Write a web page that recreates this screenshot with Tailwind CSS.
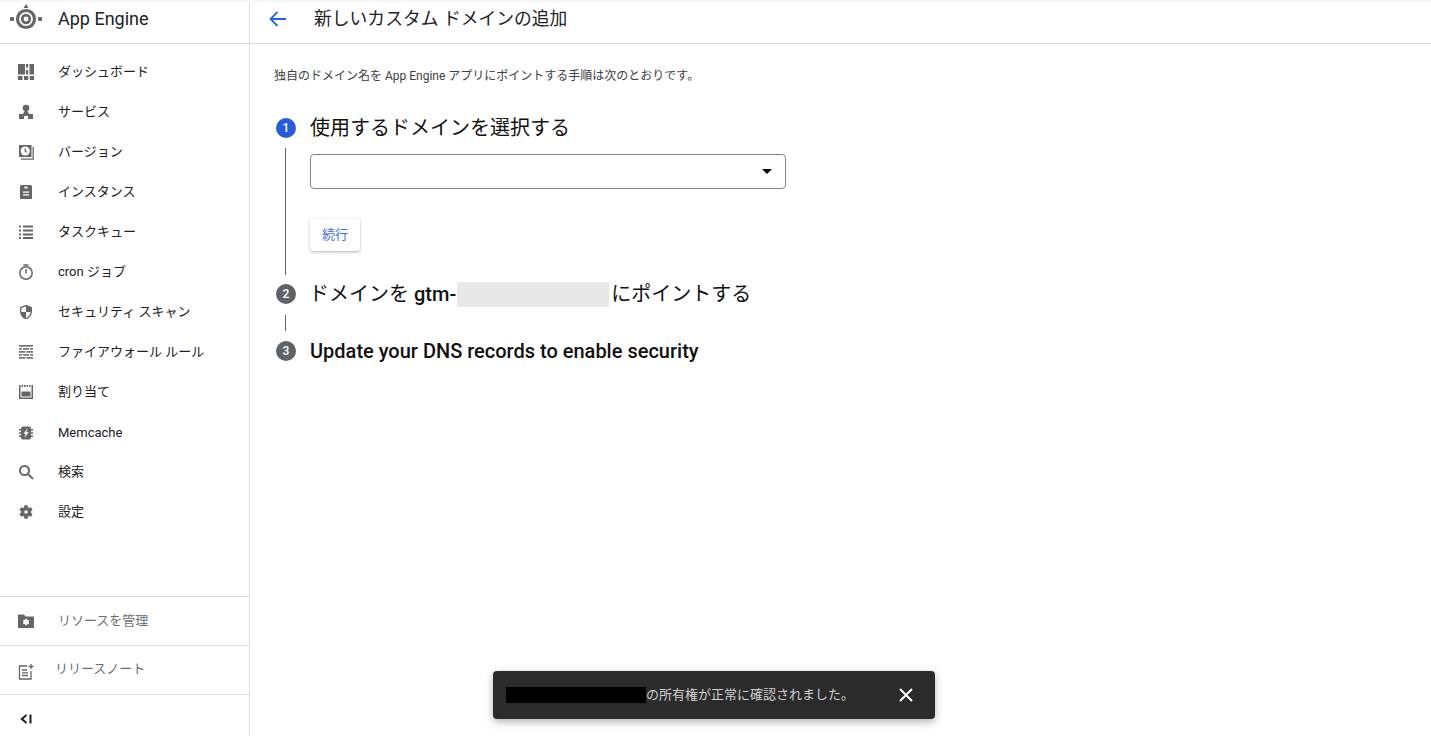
<!DOCTYPE html>
<html lang="ja">
<head>
  <meta charset="UTF-8">
  <title>App Engine</title>
  <script src="https://cdn.jsdelivr.net/npm/@tailwindcss/browser@4"></script>
</head>
<body class="h-[736px] overflow-hidden bg-white text-[#202124] font-['Roboto','Noto_Sans_CJK_JP',sans-serif]">
  <div class="flex h-full relative">
    <!-- faint shadow along the top of the page -->
    <div class="absolute inset-x-0 top-0 h-[2px] bg-[#f6f6f6]"></div>

    <!-- sidebar -->
    <aside class="w-[250px] shrink-0 border-r border-[#dadce0] flex flex-col">
      <div class="h-[44px] shrink-0 border-b border-[#dadce0] flex items-center pl-[10px]">
        <svg class="w-[32px] h-[32px] -mt-[5px]" viewBox="0 0 32 32" fill="#666">
          <path d="M16 1l2.500 4h-5z"/>
          <rect x="0" y="14" width="4" height="4" rx="1"/>
          <rect x="28" y="14" width="4" height="4" rx="1"/>
          <circle cx="16" cy="16" r="8.500" fill="none" stroke="#666" stroke-width="3.200"/>
          <circle cx="16" cy="16" r="3.800" fill="none" stroke="#666" stroke-width="2.700"/>
        </svg>
        <span class="ml-[16px] text-[18px] -mt-[6px]">App Engine</span>
      </div>

      <nav class="pt-[8px] flex-1 text-[13px]">
        <a class="h-[40px] flex items-center pl-[18px] gap-[24px]">
          <svg class="w-[16px] h-[16px]" viewBox="0 0 16 16" fill="#666"><path d="M0 0h7v10.500H0zM8 0h2.200v3.500H8zM8 6h2.200v4.500H8zM11.500 0H16v10.500h-4.500zM0 12h4.500v4H0zM6 12h4.200v4H6zM11.700 12H16v4h-4.300z"/></svg>
          <span>ダッシュボード</span>
        </a>
        <a class="h-[40px] flex items-center pl-[18px] gap-[24px]">
          <svg class="w-[16px] h-[16px]" viewBox="0 0 16 16" fill="#666"><circle cx="8" cy="4" r="3.300"/><path d="M1 10h5v5H1zM10 10h5v5h-5zM5 10l2.200-4h1.600L11 10l-1.500 2h-3z"/></svg>
          <span>サービス</span>
        </a>
        <a class="h-[40px] flex items-center pl-[18px] gap-[24px]">
          <svg class="w-[16px] h-[16px]" viewBox="0 0 16 16" fill="none" stroke="#666"><rect x="1" y="1" width="12.500" height="12" fill="#666" stroke="none"/><circle cx="7.200" cy="7" r="4.600" fill="#fff" stroke="none"/><path d="M7.200 4.500v2.700l1.800 1.100" stroke-width="1.300"/><path d="M15.200 3v12.200H3" stroke-width="1.300"/></svg>
          <span>バージョン</span>
        </a>
        <a class="h-[40px] flex items-center pl-[18px] gap-[24px]">
          <svg class="w-[16px] h-[16px]" viewBox="0 0 16 16" fill="#666"><path d="M2 2.500a1.500 1.500 0 0 1 1.500-1.500h9A1.500 1.500 0 0 1 14 2.500V15H2z"/><path d="M6.500 2.500h3v2h-3zM5 7.500h6v1.200H5zM5 10.300h6v1.200H5z" fill="#fff"/></svg>
          <span>インスタンス</span>
        </a>
        <a class="h-[40px] flex items-center pl-[18px] gap-[24px]">
          <svg class="w-[16px] h-[16px]" viewBox="0 0 16 16" fill="#666"><path d="M1 1.500h2v2H1zM5 1.500h10v2H5zM1 5.500h2v2H1zM5 5.500h10v2H5zM1 9.500h2v2H1zM5 9.500h10v2H5zM1 13h2v2H1zM5 13h10v2H5z"/></svg>
          <span>タスクキュー</span>
        </a>
        <a class="h-[40px] flex items-center pl-[18px] gap-[24px]">
          <svg class="w-[16px] h-[16px]" viewBox="0 0 16 16" fill="none" stroke="#666" stroke-width="1.500"><circle cx="8" cy="9" r="6.200"/><path d="M5.500 1h5M8 5v4.500"/></svg>
          <span>cron ジョブ</span>
        </a>
        <a class="h-[40px] flex items-center pl-[18px] gap-[24px]">
          <svg class="w-[16px] h-[16px]" viewBox="0 0 24 24" fill="#666"><path d="M12 1L3 5v6c0 5.550 3.840 10.740 9 12 5.160-1.260 9-6.450 9-12V5l-9-4zm0 10.990h7c-.53 4.120-3.280 7.790-7 8.940V12H5V6.300l7-3.110v8.800z"/></svg>
          <span>セキュリティ スキャン</span>
        </a>
        <a class="h-[40px] flex items-center pl-[18px] gap-[24px]">
          <svg class="w-[16px] h-[16px]" viewBox="0 0 16 16" fill="#777"><path d="M1 1h14v1.700H1zM1 4h3v1.700H1zM5 4h6v1.700H5zM12 4h3v1.700h-3zM1 7h6.500v1.700H1zM8.500 7H15v1.700H8.500zM1 10h3v1.700H1zM5 10h6v1.700H5zM12 10h3v1.700h-3zM1 13h6.500v1.700H1zM8.500 13H15v1.700H8.500z"/></svg>
          <span>ファイアウォール ルール</span>
        </a>
        <a class="h-[40px] flex items-center pl-[18px] gap-[24px]">
          <svg class="w-[16px] h-[16px]" viewBox="0 0 16 16" fill="none" stroke="#666" stroke-width="1.500"><path d="M1.750 3v11.250h12.500V3"/><path d="M1 2h14" stroke-width="2" stroke-dasharray="1.500 1"/><rect x="3.500" y="7.500" width="9" height="5" fill="#666" stroke="none"/></svg>
          <span>割り当て</span>
        </a>
        <a class="h-[40px] flex items-center pl-[18px] gap-[24px]">
          <svg class="w-[16px] h-[16px] mt-[1px]" viewBox="0 0 16 16" fill="#666"><path d="M5 1.500h6a2 2 0 0 1 2 2v9a2 2 0 0 1-2 2H5a2 2 0 0 1-2-2v-9a2 2 0 0 1 2-2z"/><path d="M1 4h2v1.600H1zM1 7.200h2v1.600H1zM1 10.400h2V12H1zM13 4h2v1.600h-2zM13 7.200h2v1.600h-2zM13 10.400h2V12h-2z"/><path d="M9.800 3L5.500 8.700h2.300L6.400 13l4.300-5.700H8.400z" fill="#fff"/></svg>
          <span class="mt-[1px]">Memcache</span>
        </a>
        <a class="h-[40px] flex items-center pl-[18px] gap-[24px]">
          <svg class="w-[16px] h-[16px]" viewBox="0 0 16 16" fill="none" stroke="#666" stroke-width="2"><circle cx="6.500" cy="6.500" r="4.500"/><path d="M10 10l5 5"/></svg>
          <span>検索</span>
        </a>
        <a class="h-[40px] flex items-center pl-[18px] gap-[24px]">
          <svg class="w-[16px] h-[16px]" viewBox="0 0 24 24" fill="#666"><path d="M19.430 12.980c.04-.32.070-.64.070-.98s-.030-.66-.070-.98l2.110-1.650c.19-.15.240-.42.120-.640l-2-3.460c-.12-.22-.39-.3-.61-.22l-2.490 1c-.52-.4-1.080-.73-1.690-.98l-.38-2.650A.488.488 0 0 0 14 2h-4c-.25 0-.46.180-.49.420l-.38 2.650c-.61.25-1.170.59-1.690.98l-2.490-1c-.23-.09-.49 0-.61.220l-2 3.460c-.13.220-.07.490.12.640l2.110 1.650c-.04.320-.07.650-.07.980s.030.660.070.980l-2.110 1.650c-.19.150-.24.420-.12.640l2 3.460c.12.220.39.300.61.220l2.490-1c.52.400 1.080.730 1.690.980l.38 2.650c.03.240.24.420.49.420h4c.25 0 .46-.18.49-.42l.38-2.650c.61-.25 1.170-.59 1.690-.98l2.490 1c.23.090.49 0 .61-.22l2-3.460c.12-.22.070-.49-.12-.64l-2.110-1.650z"/><circle cx="12" cy="12" r="2.600" fill="#fff"/></svg>
          <span>設定</span>
        </a>
      </nav>

      <div class="text-[13px] text-[#6b6f73]">
        <a class="h-[49px] border-t border-[#dadce0] flex items-center pl-[18px] gap-[24px]">
          <svg class="w-[16px] h-[16px]" viewBox="0 0 16 16" fill="#666"><path d="M0 1.500h6L7.500 3.500H16V15H0z"/><path transform="translate(4.200 5.200) scale(.32)" fill="#fff" d="M19.430 12.980c.04-.32.070-.64.070-.98s-.030-.66-.070-.98l2.110-1.650c.19-.15.240-.42.120-.640l-2-3.460c-.12-.22-.39-.3-.61-.22l-2.490 1c-.52-.4-1.080-.73-1.690-.98l-.38-2.650A.488.488 0 0 0 14 2h-4c-.25 0-.46.180-.49.420l-.38 2.650c-.61.25-1.170.59-1.690.98l-2.490-1c-.23-.09-.49 0-.61.220l-2 3.460c-.13.220-.07.490.12.640l2.110 1.650c-.04.320-.07.650-.07.980s.030.660.070.980l-2.110 1.650c-.19.150-.24.420-.12.640l2 3.460c.12.220.39.300.61.220l2.490-1c.52.400 1.080.730 1.690.980l.38 2.650c.03.240.24.420.49.420h4c.25 0 .46-.18.49-.42l.38-2.650c.61-.25 1.170-.59 1.690-.98l2.490 1c.23.090.49 0 .61-.22l2-3.460c.12-.22.070-.49-.12-.64l-2.110-1.650z"/></svg>
          <span>リソースを管理</span>
        </a>
        <a class="h-[49px] border-t border-[#dadce0] flex items-center pl-[18px] gap-[21px]">
          <svg class="w-[16px] h-[16px] mt-[3px]" viewBox="0 0 16 16" fill="none" stroke="#666" stroke-width="1.300"><path d="M9 2H1.500v13H13V7"/><path d="M4 6h5M4 8.800h6M4 11.500h6"/><path d="M13 0v5M10.500 2.500h5"/></svg>
          <span class="-mt-[2px]">リリースノート</span>
        </a>
        <div class="h-[42px] border-t border-[#dadce0] flex items-center pl-[20px] pt-[6px]">
          <svg class="w-[12px] h-[12px]" viewBox="0 0 12 12" fill="none" stroke="#202124" stroke-width="2"><path d="M6.500 2L1.800 6l4.700 4M10.500 1.500v9"/></svg>
        </div>
      </div>
    </aside>

    <!-- main -->
    <main class="flex-1 flex flex-col">
      <header class="h-[44px] shrink-0 border-b border-[#dadce0] flex items-center pl-[18px]">
        <svg class="w-[20px] h-[20px] -mt-[6px]" viewBox="0 0 20 20" fill="none" stroke="#2f62d8" stroke-width="1.800"><path d="M18 10H3M9.500 3L2.500 10l7 7"/></svg>
        <h1 class="ml-[26px] text-[17.800px] -mt-[4px]">新しいカスタム ドメインの追加</h1>
      </header>

      <div class="pl-[24px] pt-[24px]">
        <p class="text-[12px] leading-[16px] text-[#3c4043]">独自のドメイン名を App Engine アプリにポイントする手順は次のとおりです。</p>

        <div class="mt-[28px]">
          <!-- step 1 -->
          <div class="flex items-center h-[32px] text-[#111]">
            <span class="w-[20px] h-[20px] ml-[2px] rounded-full bg-[#2a5bd7] text-white text-[12px] font-medium flex items-center justify-center">1</span>
            <h2 class="ml-[14px] text-[20px]">使用するドメインを選択する</h2>
          </div>
          <div class="flex">
            <div class="w-[1px] ml-[11px] mt-[4px] bg-[#5f6368] h-[127px]"></div>
            <div class="ml-[24px] pt-[10px]">
              <div class="w-[476px] h-[35px] border border-[#80868b] rounded-[4px] flex items-center justify-end pr-[13px]">
                <span class="w-0 h-0 border-x-[5px] border-x-transparent border-t-[5px] border-t-black"></span>
              </div>
              <button class="mt-[30px] w-[50px] h-[32px] rounded-[3px] bg-white text-[13px] text-[#3b6fd9] shadow-[0_1px_3px_rgba(60,64,67,0.4)]">続行</button>
            </div>
          </div>

          <!-- step 2 -->
          <div class="flex items-center h-[38px] text-[#111]">
            <span class="w-[20px] h-[20px] ml-[2px] rounded-full bg-[#5f6368] text-white text-[12px] font-medium flex items-center justify-center">2</span>
            <h2 class="ml-[13px] text-[20px] flex items-center">ドメインを&nbsp;<b class="font-medium">gtm-</b><span class="ml-[1px] w-[152px] h-[25px] bg-[#e8e8e8] inline-block"></span><span class="ml-[2px]">にポイントする</span></h2>
          </div>
          <div class="w-[1px] ml-[11px] mt-[2px] bg-[#5f6368] h-[16px]"></div>

          <!-- step 3 -->
          <div class="flex items-center h-[36px] mt-[2px] text-[#111]">
            <span class="w-[20px] h-[20px] ml-[2px] rounded-full bg-[#5f6368] text-white text-[12px] font-medium flex items-center justify-center">3</span>
            <h2 class="ml-[14px] -mt-[1px] text-[20px] font-medium">Update your DNS records to enable security</h2>
          </div>
        </div>
      </div>
    </main>

    <!-- snackbar -->
    <div class="absolute left-[493px] top-[671px] w-[442px] h-[48px] rounded-[4px] bg-[#2b2b2b] shadow-[0_3px_8px_rgba(0,0,0,0.3)] flex items-center pl-[13px] text-[13px] text-[#d0d0d0]">
      <span class="w-[140px] h-[16px] bg-black"></span>
      <span>の所有権が正常に確認されました。</span>
      <svg class="w-[14px] h-[14px] absolute right-[22px] top-[17px]" viewBox="0 0 14 14" fill="none" stroke="#fff" stroke-width="2"><path d="M1 1l12 12M13 1L1 13"/></svg>
    </div>
  </div>
</body>
</html>
